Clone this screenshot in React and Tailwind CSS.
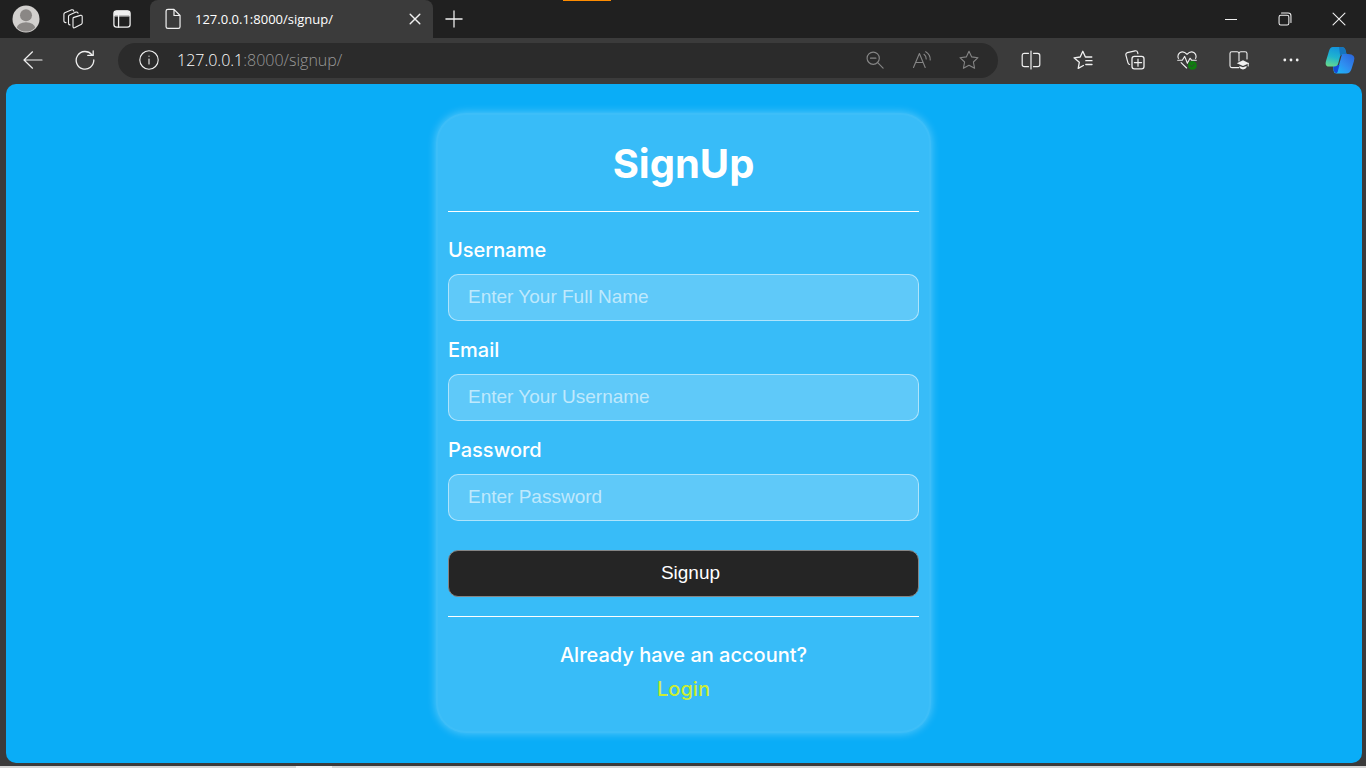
import React from "react";

function Icon({ children, size = 20, className = "" }) {
  return (
    <svg
      width={size}
      height={size}
      viewBox="0 0 20 20"
      fill="none"
      stroke="currentColor"
      strokeWidth="1.1"
      strokeLinecap="round"
      strokeLinejoin="round"
      className={className}
      aria-hidden="true"
    >
      {children}
    </svg>
  );
}

function IconButton({ label, className, children }) {
  return (
    <button type="button" aria-label={label} className={`flex shrink-0 items-center justify-center ${className}`}>
      {children}
    </button>
  );
}

const STAR = "M10 1.2 L12.7 6.9 L19 7.7 L14.4 12 L15.6 18.3 L10 15.2 L4.4 18.3 L5.6 12 L1 7.7 L7.3 6.9 Z";

function TitleBar() {
  return (
    <div className="relative flex h-[38px] bg-[#202020] text-[#f0f0f0]">
      <div className="absolute left-[563px] top-0 h-px w-12 bg-[#ff8c00]" />
      <div className="flex w-[150px] shrink-0 items-center pl-0.5">
        <IconButton label="Profile" className="h-full w-12">
          <svg width="28" height="28" viewBox="0 0 28 28" aria-hidden="true">
            <defs>
              <clipPath id="avatar">
                <circle cx="14" cy="14" r="12.6" />
              </clipPath>
            </defs>
            <circle cx="14" cy="14" r="13.5" fill="#d2d0ce" />
            <g clipPath="url(#avatar)" fill="#8a8785">
              <circle cx="14" cy="10.3" r="6" />
              <ellipse cx="14" cy="23.5" rx="9.3" ry="6.2" />
            </g>
          </svg>
        </IconButton>
        <IconButton label="Workspaces" className="h-full w-[46px]">
          <Icon>
            <path d="M10.2 8.6 L17.3 6.4 Q19.2 5.9 19.2 7.6 V13.7 Q19.2 14.6 18.4 15.2 L12 18.6 Q10 19.4 10 17.4 V9.6 Q10 8.8 10.8 8.4" />
            <path d="M7 15.9 Q5.5 15.9 5.5 14.2 V7.5 Q5.5 6.5 6.5 6 L13 3.1 Q14.8 2.7 15 4.2" />
            <path d="M3 13.6 Q.9 13.6 .9 11.7 V5.2 Q.9 4.2 1.8 3.7 L8.7 .8 Q10.6 .4 10.8 2.2" />
          </Icon>
        </IconButton>
        <IconButton label="Tab actions menu" className="h-full w-[52px]">
          <Icon size={18}>
            <rect x="1" y="1" width="18" height="18" rx="3" strokeWidth="1.4" />
            <path d="M1.5 6.2 V4 Q1.5 1.2 4 1.2 H16 Q18.5 1.2 18.5 4 V6.2 Z" fill="currentColor" />
            <path d="M6.2 6 V19" strokeWidth="1.4" />
          </Icon>
        </IconButton>
      </div>
      <div className="flex w-[283px] shrink-0 items-center rounded-t-lg bg-[#3b3b3b] pl-3 pr-1 font-['Open_Sans',sans-serif]">
        <Icon size={22}>
          <path d="M5.4 1.2 H10.9 L16.4 6.8 V17 Q16.4 18.5 14.9 18.5 H5.4 Q3.7 18.5 3.7 17 V2.8 Q3.7 1.2 5.4 1.2 Z M10.9 1.4 V6.8 H16.2" />
        </Icon>
        <span className="grow pl-[11px] text-[13px] leading-4 text-white">127.0.0.1:8000/signup/</span>
        <IconButton label="Close tab" className="size-7">
          <Icon size={12}>
            <path d="M2 2 L18 18 M18 2 L2 18" strokeWidth="2.4" />
          </Icon>
        </IconButton>
      </div>
      <IconButton label="New tab" className="w-[42px]">
        <Icon size={18}>
          <path d="M10 1 V19 M1 10 H19" strokeWidth="1.4" />
        </Icon>
      </IconButton>
      <div className="grow" />
      <IconButton label="Minimize" className="w-[54px]">
        <Icon size={12}>
          <path d="M0 10.8 H20" strokeWidth="1.7" />
        </Icon>
      </IconButton>
      <IconButton label="Restore" className="w-[54px]">
        <Icon size={14}>
          <rect x="1.5" y="4.5" width="14" height="14" rx="2.5" strokeWidth="1.5" />
          <path d="M5 1.5 H14.5 Q18.5 1.5 18.5 5.5 V15" strokeWidth="1.5" />
        </Icon>
      </IconButton>
      <IconButton label="Close" className="w-[54px]">
        <Icon size={14}>
          <path d="M1.5 1.5 L18.5 18.5 M18.5 1.5 L1.5 18.5" strokeWidth="1.6" />
        </Icon>
      </IconButton>
    </div>
  );
}

function Copilot() {
  return (
    <svg width="30" height="28" viewBox="0 0 30 28" aria-hidden="true">
      <defs>
        <linearGradient id="ribbonLeft" x1=".3" y1="0" x2="0" y2="1">
          <stop offset="0" stopColor="#1496dc" />
          <stop offset=".45" stopColor="#1fb4cf" />
          <stop offset="1" stopColor="#70dd83" />
        </linearGradient>
        <linearGradient id="ribbonRight" x1="1" y1="0" x2="0" y2="1">
          <stop offset="0" stopColor="#2b62d9" />
          <stop offset=".5" stopColor="#2f8df0" />
          <stop offset="1" stopColor="#16c4fa" />
        </linearGradient>
      </defs>
      <path d="M8 19 H14 L17 8 H23 Q27 8 28.6 10 Q30 11.5 29 15 L26.5 23 Q25 27.5 21 27.5 H11.5 Q9 27.5 8.6 25 Z" fill="url(#ribbonRight)" />
      <path d="M8 19 H14.5 L12.6 26 Q12 27.5 10.8 27 Q9 26.6 8.7 24 Z" fill="#1549d5" />
      <path d="M7.8 1 H17 Q19.6 1 20.3 3.6 L21.5 8 H18.5 Q15.8 8 15 10.8 L13.2 17.5 Q12.5 20.5 9 20.5 H4 Q-.5 20.5 1 15 L4 5 Q5.2 1 7.8 1 Z" fill="url(#ribbonLeft)" />
      <path d="M14 1 H17 Q19.6 1 20.3 3.6 L21.5 8 H18.5 Q16 8 15.2 10 Z" fill="#1575bd" />
    </svg>
  );
}

function Toolbar() {
  return (
    <div className="flex h-[46px] items-center bg-[#3b3b3b] pb-0.5 pl-[7px] pr-[3px] text-[#f0f0f0]">
      <IconButton label="Back" className="h-9 w-[52px]">
        <Icon size={20}>
          <path d="M19 10 H1 M9.5 1.8 L1 10 L9.5 18.2" strokeWidth="1.2" />
        </Icon>
      </IconButton>
      <IconButton label="Refresh" className="h-9 w-[52px]">
        <Icon size={20}>
          <path d="M16.8 4.7 A8.8 8.8 0 1 0 18.8 10 M18.2 .8 V5.4 H12.8" strokeWidth="1.3" />
        </Icon>
      </IconButton>
      <div className="mx-[7px] flex h-[35px] min-w-0 grow items-center rounded-full bg-[#2b2b2b] pl-[18px] pr-[6px]">
        <IconButton label="View site information" className="h-full w-[26px]">
          <Icon>
            <circle cx="10" cy="10" r="9.2" />
            <path d="M10 9 V14" />
            <circle cx="10" cy="6.2" r=".6" fill="currentColor" stroke="none" />
          </Icon>
        </IconButton>
        <div className="grow pl-[15px] font-['Open_Sans',sans-serif] text-[16px] font-light leading-6 text-[#999]">
          <span className="text-white">127.0.0.1</span>:8000/signup/
        </div>
        <div className="flex h-full text-[#858585]">
          <IconButton label="Zoom" className="w-[47px]">
            <Icon size={18}>
              <circle cx="8" cy="8" r="6.8" strokeWidth="1.3" />
              <path d="M5 8 H11 M13 13 L19 19" strokeWidth="1.3" />
            </Icon>
          </IconButton>
          <IconButton label="Read aloud" className="w-[47px]">
            <Icon>
              <path d="M1.5 17.5 L7.4 3.5 L13.2 17.5 M3.6 12.5 H11.2 M12 4.3 Q14.2 6 14.2 9 M13.7 1.7 Q18.5 4.5 18.2 10" />
            </Icon>
          </IconButton>
          <IconButton label="Add to favorites" className="w-[47px]">
            <Icon>
              <path d={STAR} />
            </Icon>
          </IconButton>
        </div>
      </div>
      <IconButton label="Split screen" className="h-9 w-[52px]">
        <Icon>
          <path d="M7.5 3.3 H3.4 Q1.2 3.3 1.2 5.5 V14.5 Q1.2 16.7 3.4 16.7 H7.5 M12.5 3.3 H16.6 Q18.8 3.3 18.8 5.5 V14.5 Q18.8 16.7 16.6 16.7 H12.5 M10 1 V19" strokeWidth="1.2" />
        </Icon>
      </IconButton>
      <IconButton label="Favorites" className="h-9 w-[52px]">
        <Icon>
          <path d="M10.4 15.5 L5.2 18.4 L6.3 12.3 L1 7.8 L7.2 7 L9.8 1.3 L12.4 7 H18.8 M12.8 10.7 H19 M12.8 14.5 H19" strokeWidth="1.3" />
        </Icon>
      </IconButton>
      <IconButton label="Collections" className="h-9 w-[52px]">
        <Icon>
          <rect x="7" y="6.4" width="12" height="12.4" rx="2.4" strokeWidth="1.3" />
          <path d="M13 9 V16.2 M9.4 12.6 H16.6" strokeWidth="1.2" />
          <path d="M4.6 14.5 Q3.3 14 2.9 12.6 L.9 5.1 Q.5 3.2 2.3 2.6 L10.1 .8 Q12.1 .5 12.6 2.4 L12.9 3.7" strokeWidth="1.2" />
        </Icon>
      </IconButton>
      <IconButton label="Browser essentials" className="h-9 w-[52px]">
        <Icon>
          <path d="M1.4 8.4 Q0 4.8 2.8 2.7 Q6.5 .4 10 4.4 Q13.5 .4 17.2 2.7 Q20 4.8 18.6 8.4 M4.1 12.6 L9.6 18" />
          <path d="M.7 10.2 H5.3 L7.7 6.4 L10.4 13.2 L13 8.2 L14.5 10.2 H19.3" />
          <circle cx="15.4" cy="15.4" r="4.4" fill="#107c10" stroke="none" />
          <path d="M13.5 15.5 L14.8 16.8 L17.3 14.2" stroke="#3b3b3b" strokeWidth=".9" />
        </Icon>
      </IconButton>
      <IconButton label="Learning toolbar" className="h-9 w-[52px]">
        <Icon>
          <path d="M9.8 17.6 H2.8 Q1 17.6 1 15.8 V3.6 Q1 1.8 2.8 1.8 H8 Q10 1.8 10 3.8 V11 M10 3.8 Q10 1.8 12 1.8 H16 Q18 1.8 18 3.6 V9" />
          <path d="M7.8 13.2 L14 10.2 L20 13.2 L14 16.1 Z" fill="currentColor" stroke="none" />
          <path d="M10.4 16 L14 17.3 L17.6 16 V17.3 Q16.8 19.4 14 19.4 Q11.2 19.4 10.4 17.3 Z" fill="currentColor" stroke="none" />
          <path d="M19.2 13.2 V16" />
        </Icon>
      </IconButton>
      <IconButton label="Settings and more" className="h-9 w-[52px]">
        <Icon>
          <g fill="currentColor" stroke="none">
            <circle cx="3.8" cy="10" r="1.4" />
            <circle cx="10" cy="10" r="1.4" />
            <circle cx="16.2" cy="10" r="1.4" />
          </g>
        </Icon>
      </IconButton>
      <IconButton label="Copilot" className="h-9 w-[46px]">
        <Copilot />
      </IconButton>
    </div>
  );
}

function Field({ id, label, type = "text", placeholder }) {
  return (
    <div className="mb-[13px]">
      <label htmlFor={id} className="mb-2 block text-[20px] font-medium leading-[32px] text-white">
        {label}
      </label>
      <input
        id={id}
        type={type}
        placeholder={placeholder}
        className="block h-[47px] w-full rounded-[10px] border border-white/50 bg-white/20 px-[19px] font-['Liberation_Sans',sans-serif] text-[19px] text-white outline-none placeholder:text-white/60"
      />
    </div>
  );
}

function SignupCard() {
  return (
    <form className="w-full max-w-[495px] rounded-[30px] border-2 border-white/3 bg-white/19 px-2.5 pb-[25px] pt-2.5 font-['Inter',sans-serif] shadow-[0_0_10px_rgba(255,255,255,0.35)]">
      <h1 className="mb-2 text-center text-[40px] font-bold leading-[78px] text-white">SignUp</h1>
      <hr className="mb-[22px] border-white" />
      <Field id="username" label="Username" placeholder="Enter Your Full Name" />
      <Field id="email" label="Email" placeholder="Enter Your Username" />
      <Field id="password" label="Password" type="password" placeholder="Enter Password" />
      <button
        type="button"
        className="mt-[29px] block h-[47px] w-full rounded-[10px] border border-[#858585] bg-[#252525] pl-[19px] pr-[5px] font-['Liberation_Sans',sans-serif] text-[19px] text-white"
      >
        Signup
      </button>
      <hr className="mb-[21px] mt-[19px] border-white" />
      <p className="text-center text-[20px] font-medium leading-[34px] text-white">
        Already have an account?
        <br />
        <a href="#login" className="text-[#ccee33]">
          Login
        </a>
      </p>
    </form>
  );
}

export default function App() {
  return (
    <div className="flex min-h-screen flex-col bg-[#3b3b3b]">
      <TitleBar />
      <Toolbar />
      <main className="mb-[3px] ml-1.5 mr-1 flex grow items-center justify-center rounded-[10px] bg-[#0aadf7] pb-0.5 pr-px">
        <SignupCard />
      </main>
      <div className="flex h-0.5 bg-[#d6d6d6]">
        <div className="ml-[296px] w-9 bg-[#f3f3f3]" />
      </div>
    </div>
  );
}
